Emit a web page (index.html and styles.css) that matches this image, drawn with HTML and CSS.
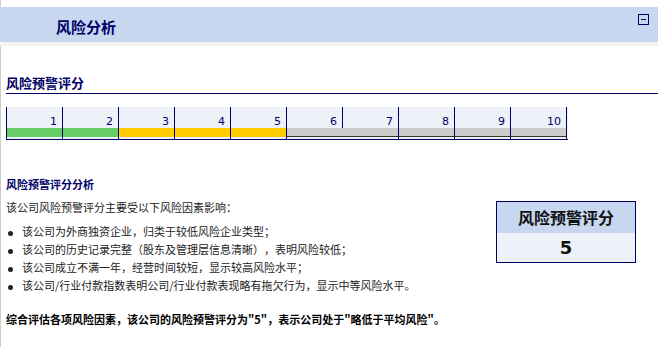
FILE: index.html
```html
<!DOCTYPE html>
<html lang="zh-CN">
<head>
  <meta charset="UTF-8">
  <title>风险分析</title>
  <link rel="stylesheet" href="styles.css">
</head>
<body>
  <div class="page">
    <!-- 面板标题 -->
    <div class="panel-head">
      <h2 class="panel-title">风险分析</h2>
      <svg class="toggle" width="11" height="11" viewBox="0 0 11 11">
        <rect x="0.5" y="0.5" width="10" height="10" fill="none" stroke="#000066"/>
        <line x1="3" y1="5.5" x2="8" y2="5.5" stroke="#000066"/>
      </svg>
    </div>

    <div class="panel-body">
      <h3 class="sec-title">风险预警评分</h3>

      <div class="scale">
        <div class="cell"><div class="num">1</div><div class="bar green"></div></div>
        <div class="cell"><div class="num">2</div><div class="bar green"></div></div>
        <div class="cell"><div class="num">3</div><div class="bar yellow"></div></div>
        <div class="cell"><div class="num">4</div><div class="bar yellow"></div></div>
        <div class="cell"><div class="num">5</div><div class="bar yellow"></div></div>
        <div class="cell cut"><div class="num">6</div><div class="bar grey"></div></div>
        <div class="cell"><div class="num">7</div><div class="bar grey"></div></div>
        <div class="cell"><div class="num">8</div><div class="bar grey"></div></div>
        <div class="cell"><div class="num">9</div><div class="bar grey"></div></div>
        <div class="cell"><div class="num">10</div><div class="bar grey"></div></div>
      </div>

      <div class="analysis">
        <div class="analysis-text">
          <h4 class="sub-title">风险预警评分分析</h4>
          <p class="intro">该公司风险预警评分主要受以下风险因素影响：</p>
          <ul class="factors">
            <li>该公司为外商独资企业，归类于较低风险企业类型；</li>
            <li>该公司的历史记录完整（股东及管理层信息清晰），表明风险较低；</li>
            <li>该公司成立不满一年，经营时间较短，显示较高风险水平；</li>
            <li>该公司/行业付款指数表明公司/行业付款表现略有拖欠行为，显示中等风险水平。</li>
          </ul>
        </div>
        <div class="score-box">
          <div class="score-head">风险预警评分</div>
          <div class="score-value">5</div>
        </div>
      </div>

      <p class="summary">综合评估各项风险因素，该公司的风险预警评分为"5"，表示公司处于"略低于平均风险"。</p>
    </div>
  </div>
</body>
</html>
```

FILE: styles.css
```css
body {
  margin: 0;
  font-family: "Noto Sans CJK SC", "DejaVu Sans", sans-serif;
  font-size: 11px;
  color: #222;
  background: #fff;
  text-spacing-trim: space-all;
}
.page {
  border-left: 1px solid #ccc;
  min-height: 347px;
  padding-top: 7px;
  box-sizing: border-box;
}
.panel-head {
  display: flex;
  justify-content: space-between;
  align-items: flex-start;
  height: 35px;
  margin-left: -1px;
  padding: 0 9px 0 56px;
  background: #c6d7ef;
  border-bottom: 4px solid #f3f3f3;
}
.panel-title {
  margin: 0;
  padding-top: 11px;
  font-size: 15px;
  line-height: 18px;
  font-weight: bold;
  color: #000066;
}
.toggle {
  margin-top: 7px;
  display: block;
}
.panel-body {
  padding-left: 5px;
}
.sec-title {
  margin: 29px 0 0;
  padding-bottom: 2px;
  font-size: 13px;
  line-height: 16px;
  font-weight: bold;
  color: #000066;
  border-bottom: 1px solid #000066;
}
.scale {
  display: flex;
  width: 561px;
  margin-top: 13px;
  border-left: 1px solid #000066;
  border-bottom: 1px solid #000066;
  background: #eef1f7;
}
.cell {
  width: 56px;
  height: 32px;
  box-sizing: border-box;
  border-right: 1px solid #000066;
}
.cell.cut {
  border-right: none;
}
.cell.cut .num {
  border-right: 1px solid #000066;
}
.num {
  height: 21px;
  box-sizing: border-box;
  padding: 9px 5px 0 0;
  line-height: 12px;
  text-align: right;
  font-family: "DejaVu Sans", sans-serif;
  color: #000066;
}
.bar {
  height: 9px;
  box-sizing: border-box;
}
.bar.green {
  background: #66cc66;
}
.bar.yellow {
  background: #ffcc00;
}
.bar.grey {
  background: #cccccc;
  border-bottom: 1px solid #333;
}
.analysis {
  display: flex;
  justify-content: space-between;
  align-items: flex-start;
  margin-top: 37px;
  padding-right: 22px;
}
.sub-title {
  margin: 0;
  font-size: 11px;
  line-height: 14px;
  font-weight: bold;
  color: #000066;
}
.intro {
  margin: 9px 0 0;
  line-height: 14px;
}
.factors {
  list-style: none;
  margin: 8px 0 0;
  padding: 0 0 0 16px;
}
.factors li {
  line-height: 18px;
}
.factors li::before {
  content: "";
  display: inline-block;
  width: 5px;
  height: 5px;
  margin: 0 9px 0 -14px;
  border-radius: 50%;
  background: #222;
  vertical-align: middle;
}
.score-box {
  width: 140px;
  margin-top: 24px;
  border: 1px solid #000066;
  box-sizing: border-box;
  text-align: center;
}
.score-head {
  height: 31px;
  line-height: 31px;
  background: #c6d7ef;
  font-size: 16px;
  font-weight: bold;
  color: #111;
}
.score-value {
  height: 29px;
  line-height: 29px;
  background: #eef1f7;
  font-family: "DejaVu Sans", sans-serif;
  font-size: 18px;
  font-weight: bold;
  color: #111;
}
.summary {
  margin: 18px 0 0;
  line-height: 14px;
  font-weight: bold;
  color: #000;
}
```
